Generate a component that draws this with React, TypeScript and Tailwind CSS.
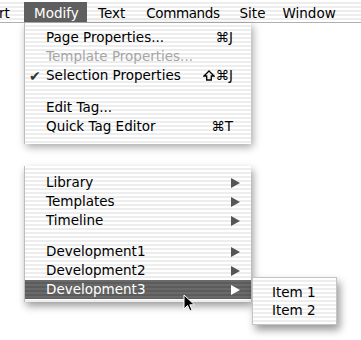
import React from "react";

const stripes =
  "bg-[repeating-linear-gradient(to_bottom,#ffffff_0px,#ffffff_2px,#ededed_2px,#ededed_4px)]";
const darkStripes =
  "bg-[repeating-linear-gradient(to_bottom,#6a6a6a_0px,#6a6a6a_2px,#5c5c5c_2px,#5c5c5c_4px)]";

function Arrow({ white }: { white?: boolean }) {
  return (
    <svg width="9" height="10" viewBox="0 0 9 10" className="block">
      <path d="M0 0 L9 5 L0 10 Z" fill={white ? "#ffffff" : "#555555"} />
    </svg>
  );
}

function Shift() {
  return (
    <svg width="12" height="11" viewBox="0 0 12 11" className="mr-[1px] inline-block align-[-1px]">
      <path
        d="M6 1 L11 6 L8.3 6 L8.3 10 L3.7 10 L3.7 6 L1 6 Z"
        fill="none"
        stroke="#000"
        strokeWidth="1.3"
        strokeLinejoin="miter"
      />
    </svg>
  );
}

function Row({
  label,
  shortcut,
  disabled,
  check,
  sub,
  active,
  children,
}: {
  label: string;
  shortcut?: React.ReactNode;
  disabled?: boolean;
  check?: boolean;
  sub?: boolean;
  active?: boolean;
  children?: React.ReactNode;
}) {
  return (
    <div
      className={`relative flex h-[19px] items-center pl-[21px] pr-[11px] ${
        active ? darkStripes + " text-white" : ""
      } ${disabled ? "text-[#a6a6a6]" : ""}`}
    >
      {check && (
        <span className="absolute left-[4px] top-[0px] text-[14px] text-[#333]">✔</span>
      )}
      <span className="flex-1 whitespace-nowrap">{label}</span>
      {shortcut && (
        <span className="mr-[7px] flex items-center whitespace-nowrap">{shortcut}</span>
      )}
      {sub && <Arrow white={active} />}
      {children}
    </div>
  );
}

function Sep() {
  return <div className="h-[12px]" />;
}

export default function App() {
  return (
    <div
      className="relative h-[340px] w-[361px] overflow-hidden bg-white text-[13.5px] text-black"
      style={{ fontFamily: '"DejaVu Sans", "Lucida Grande", sans-serif' }}
    >
      {/* menu bar */}
      <div className={`flex h-[23px] items-end border-b border-[#b0b0b0] ${stripes}`}>
        <div className="flex h-[20px] items-center">
          <span className="ml-[-1px] w-[25px] pt-[2px]">rt</span>
          <span className="flex h-[20px] w-[63px] items-center bg-[#5f5f5f] pl-[10px] pt-[2px] text-white">
            Modify
          </span>
          <span className="ml-[11px] pt-[2px]">Text</span>
          <span className="ml-[21px] pt-[2px] tracking-[-0.4px]">Commands</span>
          <span className="ml-[20px] pt-[2px]">Site</span>
          <span className="ml-[17px] pt-[2px]">Window</span>
        </div>
      </div>

      {/* first part of menu */}
      <div
        className={`ml-[24px] w-[227px] pt-[5px] pb-[8px] ${stripes} shadow-[2px_3px_8px_rgba(0,0,0,0.35)] border-l border-[#bdbdbd]`}
      >
        <Row label="Page Properties..." shortcut="⌘J" />
        <Row label="Template Properties..." disabled />
        <Row
          label="Selection Properties"
          shortcut={
            <>
              <Shift />
              ⌘J
            </>
          }
          check
        />
        <div className="h-[13px]" />
        <Row label="Edit Tag..." />
        <Row label="Quick Tag Editor" shortcut="⌘T" />
      </div>

      {/* second part of menu */}
      <div
        className={`relative mt-[22px] ml-[24px] w-[227px] pt-[7px] pb-[3px] ${stripes} shadow-[2px_4px_8px_rgba(0,0,0,0.4)] border-l border-[#bdbdbd]`}
      >
        <Row label="Library" sub />
        <Row label="Templates" sub />
        <Row label="Timeline" sub />
        <Sep />
        <Row label="Development1" sub />
        <Row label="Development2" sub />
        <Row label="Development3" sub active>
          <div
            className={`absolute left-[227px] top-[-3px] w-[85px] border border-[#c4c4c4] py-[5px] ${stripes} shadow-[3px_5px_8px_rgba(0,0,0,0.4)] text-black`}
          >
            <div className="flex h-[18px] items-center pl-[19px]">Item 1</div>
            <div className="flex h-[18px] items-center pl-[19px]">Item 2</div>
          </div>
        </Row>
      </div>

      {/* cursor */}
      <svg
        className="absolute left-[183px] top-[294px]"
        width="13"
        height="19"
        viewBox="0 0 13 19"
      >
        <path
          d="M1 1 L1 15 L4.5 11.5 L7 17 L9 16 L6.8 10.8 L11.5 10.8 Z"
          fill="#000"
          stroke="#fff"
          strokeWidth="1"
        />
      </svg>
    </div>
  );
}
